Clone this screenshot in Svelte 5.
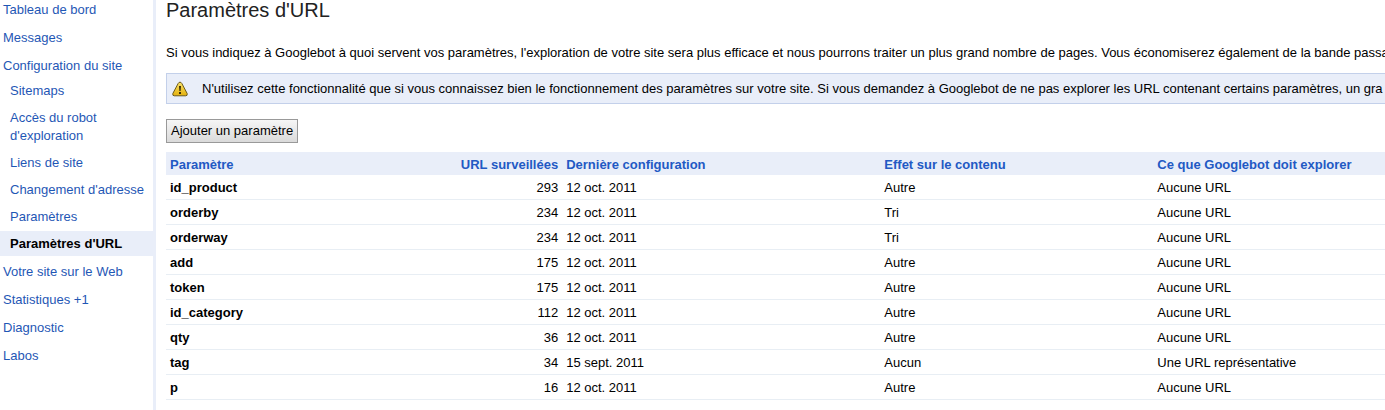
<style>
:global(body) {
  margin: 0;
  background: #fff;
  color: #000;
  font: 13px/18px "Liberation Sans", Arial, sans-serif;
}
.page {
  display: flex;
  min-height: 100vh;
  overflow: hidden;
}
a {
  color: #1f57b5;
  text-decoration: none;
}
a:hover {
  text-decoration: underline;
}
.sidebar {
  flex: 0 0 153px;
  border-right: 3px solid #e9eef9;
}
ul {
  list-style: none;
  margin: 0;
  padding: 0;
}
.menu {
  display: flex;
  flex-direction: column;
  gap: 10px;
  padding-top: 1px;
}
.menu > li > a {
  display: block;
  padding-left: 3px;
}
.submenu {
  display: flex;
  flex-direction: column;
  gap: 2px;
  margin: 3px 0 -3px;
}
.submenu a {
  display: block;
  padding: 4px 8px 3px 10px;
}
.submenu .current {
  background: #e9eef9;
  color: #000;
  font-weight: bold;
}
main {
  flex: 1;
  min-width: 0;
  padding-left: 10px;
  white-space: nowrap;
}
h1 {
  margin: 0;
  color: #222;
  font-size: 20px;
  line-height: 20px;
  font-weight: normal;
}
.intro {
  margin: 24px 0 11px;
}
.notice {
  display: flex;
  align-items: center;
  gap: 14px;
  height: 28px;
  padding: 1px 0 0 5px;
  border: 1px solid #c3d0ea;
  border-right: 0;
  background: #e9eef9;
}
.notice svg {
  flex: none;
}
.add {
  display: block;
  height: 24px;
  margin: 15px 0 9px;
  padding: 0 4px;
  border: 1px solid #999;
  background: linear-gradient(#f6f6f6, #dadada);
  color: #000;
  font: inherit;
}
table {
  width: 100%;
  table-layout: fixed;
  border-collapse: separate;
  border-spacing: 0;
}
th, td {
  padding: 2px 4px 0;
  text-align: left;
}
thead th {
  height: 21px;
  background: #e9eef9;
  color: #2259c4;
}
tbody th, tbody td {
  height: 22px;
  border-bottom: 1px solid #e8eef4;
}
th.count, .count {
  text-align: right;
}
.col-name {
  width: 21%;
}
.col-count {
  width: 11.5%;
}
.col-date {
  width: 26.1%;
}
.col-effect {
  width: 22.4%;
}
</style>

<script>
const menu = [
  { label: "Tableau de bord" },
  { label: "Messages" },
  {
    label: "Configuration du site",
    items: [
      "Sitemaps",
      "Accès du robot d'exploration",
      "Liens de site",
      "Changement d'adresse",
      "Paramètres",
      "Paramètres d'URL",
    ],
  },
  { label: "Votre site sur le Web" },
  { label: "Statistiques +1" },
  { label: "Diagnostic" },
  { label: "Labos" },
]
const current = "Paramètres d'URL"

const params = [
  { name: "id_product", count: 293, date: "12 oct. 2011", effect: "Autre", crawl: "Aucune URL" },
  { name: "orderby", count: 234, date: "12 oct. 2011", effect: "Tri", crawl: "Aucune URL" },
  { name: "orderway", count: 234, date: "12 oct. 2011", effect: "Tri", crawl: "Aucune URL" },
  { name: "add", count: 175, date: "12 oct. 2011", effect: "Autre", crawl: "Aucune URL" },
  { name: "token", count: 175, date: "12 oct. 2011", effect: "Autre", crawl: "Aucune URL" },
  { name: "id_category", count: 112, date: "12 oct. 2011", effect: "Autre", crawl: "Aucune URL" },
  { name: "qty", count: 36, date: "12 oct. 2011", effect: "Autre", crawl: "Aucune URL" },
  { name: "tag", count: 34, date: "15 sept. 2011", effect: "Aucun", crawl: "Une URL représentative" },
  { name: "p", count: 16, date: "12 oct. 2011", effect: "Autre", crawl: "Aucune URL" },
]
</script>

<div class="page">
  <nav class="sidebar">
    <ul class="menu">
      {#each menu as entry}
        <li>
          <a href="#/">{entry.label}</a>
          {#if entry.items}
            <ul class="submenu">
              {#each entry.items as item}
                <li><a href="#/" class:current={item === current}>{item}</a></li>
              {/each}
            </ul>
          {/if}
        </li>
      {/each}
    </ul>
  </nav>

  <main>
    <h1>Paramètres d'URL</h1>
    <p class="intro">Si vous indiquez à Googlebot à quoi servent vos paramètres, l'exploration de votre site sera plus efficace et nous pourrons traiter un plus grand nombre de pages. Vous économiserez également de la bande passa</p>
    <div class="notice">
      <svg width="16" height="16" viewBox="0 0 16 16" aria-hidden="true">
        <defs>
          <linearGradient id="warn" x1="0" y1="0" x2="0" y2="1">
            <stop offset="0" stop-color="#fbe36a" />
            <stop offset="1" stop-color="#e3b00c" />
          </linearGradient>
        </defs>
        <path d="M8 1.2Q9.2 1.2 9.8 2.4L15.2 12.6Q15.6 14.8 13.8 14.8H2.2Q.4 14.8 .8 12.6L6.2 2.4Q6.8 1.2 8 1.2Z" fill="url(#warn)" stroke="#6b5a1c" />
        <path d="M7 5h2l-.4 5H7.4Z" fill="#3a2e08" />
        <rect x="7" y="11" width="2" height="2" fill="#3a2e08" />
      </svg>
      <span>N'utilisez cette fonctionnalité que si vous connaissez bien le fonctionnement des paramètres sur votre site. Si vous demandez à Googlebot de ne pas explorer les URL contenant certains paramètres, un gra</span>
    </div>
    <button class="add" type="button">Ajouter un paramètre</button>
    <table>
      <colgroup>
        <col class="col-name" />
        <col class="col-count" />
        <col class="col-date" />
        <col class="col-effect" />
        <col />
      </colgroup>
      <thead>
        <tr>
          <th scope="col">Paramètre</th>
          <th scope="col" class="count">URL surveillées</th>
          <th scope="col">Dernière configuration</th>
          <th scope="col">Effet sur le contenu</th>
          <th scope="col">Ce que Googlebot doit explorer</th>
        </tr>
      </thead>
      <tbody>
        {#each params as param}
          <tr>
            <th scope="row">{param.name}</th>
            <td class="count">{param.count}</td>
            <td>{param.date}</td>
            <td>{param.effect}</td>
            <td>{param.crawl}</td>
          </tr>
        {/each}
      </tbody>
    </table>
  </main>
</div>
